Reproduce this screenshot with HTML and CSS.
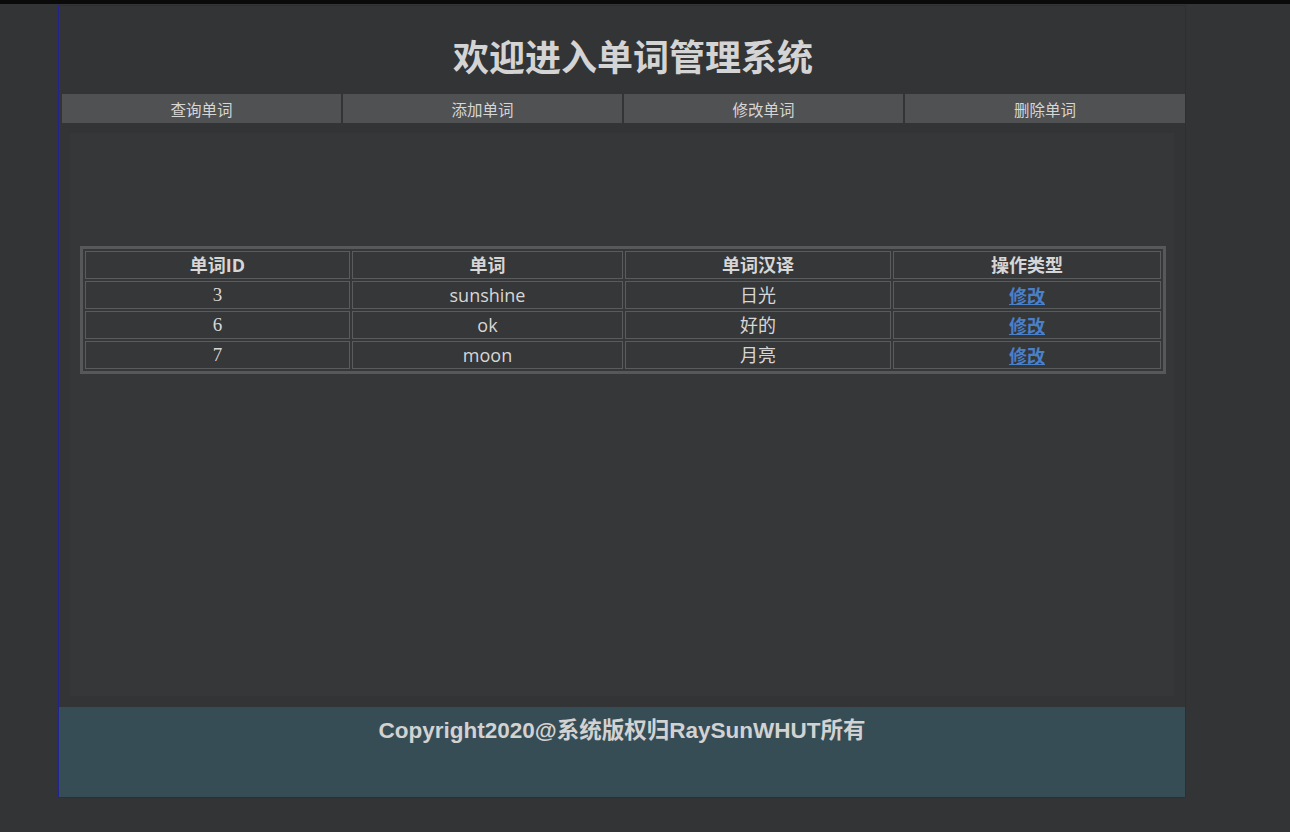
FILE: index.html
```html
<!DOCTYPE html>
<html lang="zh-CN">
<head>
<meta charset="utf-8">
<title>单词管理系统</title>
<link rel="stylesheet" href="styles.css">
</head>
<body>
<div class="topbar"></div>
<div class="frame">
  <header class="header">
    <h1 class="title">欢迎进入单词管理系统</h1>
  </header>
  <nav class="nav">
    <a class="nav-item">查询单词</a>
    <a class="nav-item">添加单词</a>
    <a class="nav-item">修改单词</a>
    <a class="nav-item">删除单词</a>
  </nav>
  <main class="content">
    <table class="words">
      <thead>
        <tr>
          <th class="c1">单词ID</th>
          <th class="c2">单词</th>
          <th class="c3">单词汉译</th>
          <th class="c4">操作类型</th>
        </tr>
      </thead>
      <tbody>
        <tr>
          <td class="num">3</td>
          <td>sunshine</td>
          <td>日光</td>
          <td><a class="op">修改</a></td>
        </tr>
        <tr>
          <td class="num">6</td>
          <td>ok</td>
          <td>好的</td>
          <td><a class="op">修改</a></td>
        </tr>
        <tr>
          <td class="num">7</td>
          <td>moon</td>
          <td>月亮</td>
          <td><a class="op">修改</a></td>
        </tr>
      </tbody>
    </table>
  </main>
  <footer class="footer">
    <p class="copy">Copyright2020@系统版权归RaySunWHUT所有</p>
  </footer>
</div>
</body>
</html>
```

FILE: styles.css
```css
html, body {
  margin: 0;
  padding: 0;
}
body {
  background: #333436;
  color: #d2d2d2;
  font-family: "Open Sans", "Noto Sans CJK SC", sans-serif;
  height: 832px;
  overflow: hidden;
}
.topbar {
  height: 4px;
  background: #0a0a0a;
}
.frame {
  margin: 1px 0 0 58px;
  width: 1126px;
  border: 1px solid #23238f;
  display: flex;
  flex-direction: column;
}
.header {
  height: 88px;
  box-sizing: border-box;
  padding: 31px 0 0 22px;
}
.title {
  margin: 0;
  text-align: center;
  font-family: "Noto Sans CJK SC", sans-serif;
  font-weight: 700;
  font-size: 36px;
  line-height: 36px;
  color: #d4d4d4;
}
.nav {
  margin-left: 3px;
  height: 29px;
  display: grid;
  grid-template-columns: 279px 279px 279px 280px;
  grid-template-rows: 29px;
  column-gap: 2px;
}
.nav-item {
  background: #505153;
  color: #d6d6d6;
  font-family: "Noto Sans CJK SC", sans-serif;
  font-size: 15.5px;
  line-height: 28px;
  text-align: center;
  padding-top: 1px;
  overflow: hidden;
}
.content {
  margin: 10px 0 0 11px;
  width: 1104px;
  height: 563px;
  box-sizing: border-box;
  background: #363739;
  padding: 113px 0 0 10px;
}
.words {
  width: 1086px;
  table-layout: fixed;
  border: 3px solid #575859;
  border-spacing: 2px;
  font-size: 18px;
  color: #d6d6d6;
}
.words th,
.words td {
  border: 1px solid #5a5b5c;
  height: 28px;
  box-sizing: border-box;
  padding: 0;
  text-align: center;
  vertical-align: middle;
  line-height: 20px;
  font-family: "Open Sans", "Noto Sans CJK SC", sans-serif;
}
.words th {
  font-weight: 700;
}
.c1 { width: 265px; }
.c2 { width: 271px; }
.c3 { width: 266px; }
.c4 { width: 268px; }
.words td.num {
  font-family: "Liberation Serif", "Noto Sans CJK SC", serif;
  font-size: 19px;
}
.op {
  color: #4a80c8;
  font-weight: 700;
  text-decoration: underline;
  font-family: "Noto Sans CJK SC", sans-serif;
}
.footer {
  margin-top: 11px;
  height: 90px;
  background: #374d56;
  box-sizing: border-box;
  padding-top: 11px;
}
.copy {
  margin: 0;
  text-align: center;
  font-family: "Liberation Sans", "Noto Sans CJK SC", sans-serif;
  font-weight: 700;
  font-size: 22.5px;
  line-height: 26px;
  color: #d2d2d2;
}
```
